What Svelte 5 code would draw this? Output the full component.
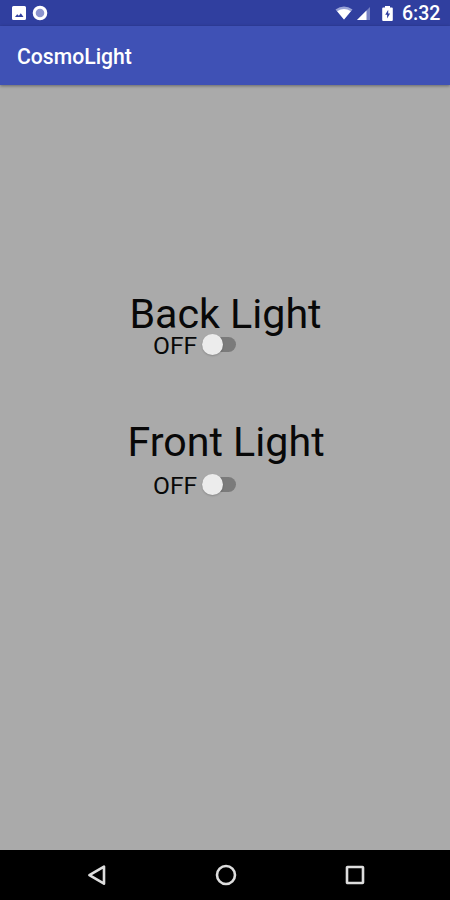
<script>
  let lights = $state([
    { name: 'Back Light', kind: 'back', on: false },
    { name: 'Front Light', kind: 'front', on: false }
  ]);
</script>

<div class="screen">
  <header class="status">
    <svg class="picture" width="14" height="14" viewBox="0 0 14 14">
      <path fill="#fff" fill-rule="evenodd" d="M1.5 0h11A1.5 1.5 0 0 1 14 1.5v11a1.5 1.5 0 0 1-1.5 1.5h-11A1.5 1.5 0 0 1 0 12.5v-11A1.5 1.5 0 0 1 1.5 0ZM3 11h8.500L8.800 7.300 6.900 9.800 5.200 8.200Z" />
    </svg>
    <svg class="ring" width="16" height="16" viewBox="0 0 16 16">
      <circle cx="8" cy="8" r="5.800" fill="#8c94ce" stroke="#fff" stroke-width="3" />
    </svg>
    <span class="fill"></span>
    <svg class="wifi" width="18" height="14" viewBox="0 0 18 14">
      <path fill="#9aa4d7" d="M0.500 3.500Q9-2.500 17.500 3.500L9 13.500Z" />
      <path fill="#fff" d="M2.200 5.200Q9 1 15.800 5.200L9 13.500Z" />
    </svg>
    <svg class="signal" width="13" height="13" viewBox="0 0 13 13">
      <path fill="#7681c3" d="M13 0v13H0Z" />
      <path fill="#fff" d="M9.500 3.500V13H0Z" />
    </svg>
    <svg class="battery" width="11" height="15" viewBox="0 0 11 15">
      <path fill="#fff" d="M3 0h5v1.500h1.800q1 0 1 1v11.500q0 1-1 1H1.200q-1 0-1-1V2.500q0-1 1-1H3Z" />
      <path fill="#303f9f" d="M6.200 3.800 3.200 8.800h1.900v3.800l3-5H6.200Z" />
    </svg>
    <span class="clock">6:32</span>
  </header>

  <div class="appbar"><h1>CosmoLight</h1></div>

  <main>
    {#each lights as light}
      <section class={light.kind}>
        <h2>{light.name}</h2>
        <button role="switch" aria-checked={light.on} aria-label={light.name} onclick={() => (light.on = !light.on)}>
          <span class="state">{light.on ? 'ON' : 'OFF'}</span>
          <span class="track" class:on={light.on}><span class="thumb"></span></span>
        </button>
      </section>
    {/each}
  </main>

  <nav>
    <svg width="22" height="22" viewBox="0 0 22 22"><path d="M18 2.700v17L3.400 11.200Z" /></svg>
    <svg width="22" height="22" viewBox="0 0 22 22"><circle cx="11" cy="11" r="9" /></svg>
    <svg width="22" height="22" viewBox="0 0 22 22"><rect x="3" y="3" width="16" height="16" rx="0.500" /></svg>
  </nav>
</div>

<style>
  .screen {
    width: 450px;
    height: 900px;
    display: flex;
    flex-direction: column;
    overflow: hidden;
    background: #aaa;
    font-family: Roboto, 'Liberation Sans', sans-serif;
  }
  svg {
    display: block;
    flex: none;
  }
  .status {
    height: 26px;
    flex: none;
    box-sizing: border-box;
    padding: 0 10px 0 12px;
    display: flex;
    align-items: center;
    background: #303f9f;
    color: #fff;
  }
  .ring { margin-left: 6px; }
  .fill { flex: 1; }
  .signal { margin: 1px 0 0 4px; }
  .battery { margin-left: 12px; }
  .clock {
    width: 38px;
    margin: 2px 0 0 9px;
    font-size: 19.500px;
    font-weight: 500;
    line-height: 24px;
    white-space: nowrap;
  }
  .appbar {
    height: 59px;
    flex: none;
    display: flex;
    align-items: center;
    padding-left: 17px;
    background: #3f51b5;
    box-shadow: 0 1px 3px rgba(0, 0, 0, 0.4);
  }
  h1 {
    margin: 2px 0 0;
    color: #fff;
    font-size: 21.200px;
    font-weight: 500;
    line-height: 26px;
  }
  main {
    flex: 1;
    display: flex;
    flex-direction: column;
    padding-top: 205px;
  }
  section {
    display: flex;
    flex-direction: column;
  }
  .front { margin-top: 62px; }
  h2 {
    margin: 0;
    text-align: center;
    color: #080808;
    font-size: 41.200px;
    font-weight: 400;
    line-height: 48px;
    height: 42px;
  }
  .back h2 { padding-left: 1px; }
  .front h2 { padding-left: 2px; height: 54px; }
  button {
    display: flex;
    align-items: center;
    height: 24px;
    margin-left: 153px;
    padding: 0;
    border: 0;
    background: none;
    font: inherit;
    color: #080808;
    align-self: flex-start;
  }
  .state {
    width: 49px;
    text-align: left;
    font-size: 24.600px;
    line-height: 28px;
    padding-top: 3px;
  }
  .track {
    width: 34px;
    height: 15px;
    border-radius: 8px;
    background: #7b7b7b;
    display: flex;
    align-items: center;
  }
  .track.on { justify-content: flex-end; background: #b77790; }
  .thumb {
    width: 21px;
    height: 21px;
    flex: none;
    border-radius: 50%;
    background: #ececec;
    box-shadow: 0 1px 2px rgba(0, 0, 0, 0.2);
  }
  nav {
    height: 50px;
    flex: none;
    box-sizing: border-box;
    padding-left: 1px;
    display: flex;
    align-items: center;
    justify-content: center;
    gap: 107px;
    background: #000;
  }
  nav path, nav circle, nav rect {
    fill: none;
    stroke: #ddd;
    stroke-width: 2.600;
    stroke-linejoin: round;
  }
</style>
